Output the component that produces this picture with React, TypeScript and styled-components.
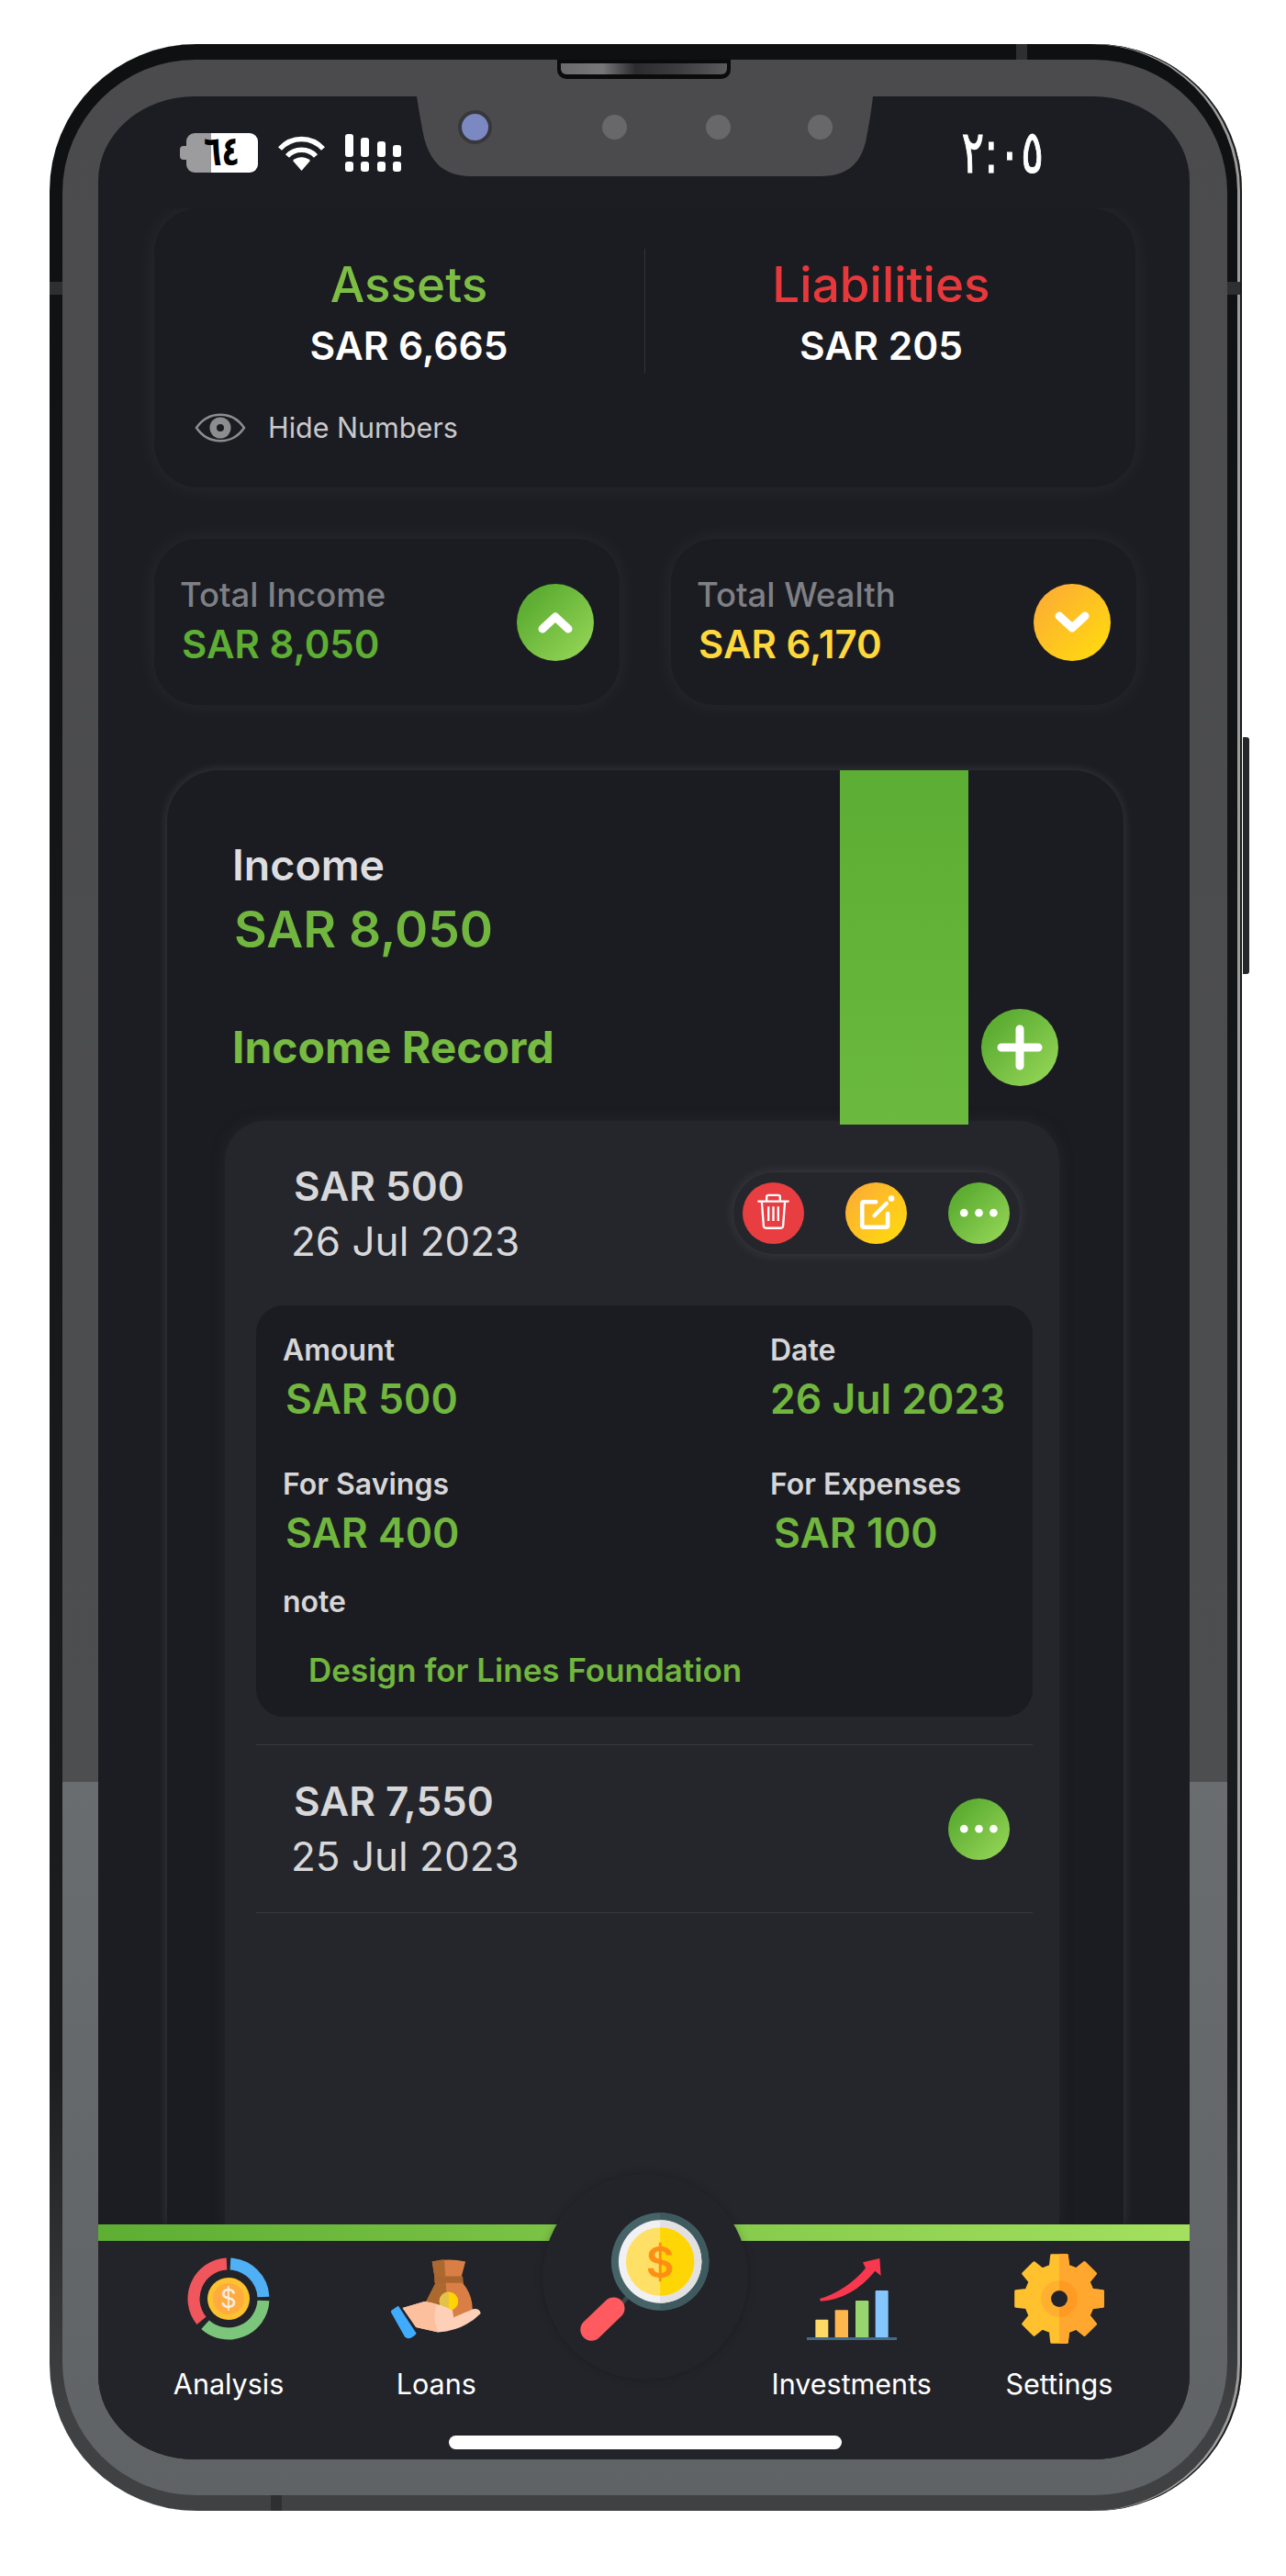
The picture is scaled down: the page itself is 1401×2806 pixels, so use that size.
import React from "react";
import styled, { createGlobalStyle } from "styled-components";

const GlobalStyle = createGlobalStyle`
  html, body {
    margin: 0;
    background: #ffffff;
  }
  * {
    box-sizing: border-box;
  }
  body {
    font-family: Inter, "Liberation Sans", sans-serif;
  }
`;

const GREEN = "linear-gradient(135deg, #5dae33 20%, #9ad95a 100%)";
const ORANGE = "linear-gradient(135deg, #fdb031 15%, #ffd612 85%)";
const RED = "#e83e41";

const Phone = styled.div`
  position: relative;
  width: 1299px;
  height: 2687px;
  margin: 48px 0 0 54px;
  padding: 17px 16px 17px 14px;
  border-radius: 160px;
  background: linear-gradient(180deg, #0f1011 0%, #1c1d1e 82%, #404143 96%);
  box-shadow: inset -2px 0 0 #1a1a1a, inset -5px 0 0 #9c9c9c;
`;

const SideButton = styled.div`
  position: absolute;
  left: 1300px;
  top: 755px;
  width: 7px;
  height: 258px;
  border-radius: 0 3px 3px 0;
  background: #26272a;
`;

const Antenna = styled.div<{ $x: number; $y: number; $w: number; $h: number }>`
  position: absolute;
  left: ${(p) => p.$x}px;
  top: ${(p) => p.$y}px;
  width: ${(p) => p.$w}px;
  height: ${(p) => p.$h}px;
  background: #2e2f31;
`;

const Speaker = styled.div`
  position: absolute;
  left: 553px;
  top: 17px;
  width: 189px;
  height: 21px;
  padding: 4px 4px 5px;
  border-radius: 0 0 10px 10px;
  background: #0b0b0c;

  &::after {
    content: "";
    display: block;
    height: 100%;
    border-radius: 0 0 6px 6px;
    background: linear-gradient(90deg, #6a6a6c 0%, #77777a 25%, #2c2c2e 45%, #3c3c3e 70%, #5a5a5c 100%);
  }
`;

const Bezel = styled.div`
  width: 100%;
  height: 100%;
  padding: 40px 41px 39px 39px;
  border-radius: 145px;
  background: linear-gradient(180deg, #4b4b4d 0, #4d4e50 1876px, #6a6d70 1876px, #5f6365 100%);
`;

const Screen = styled.div`
  position: relative;
  display: flex;
  flex-direction: column;
  width: 100%;
  height: 100%;
  overflow: hidden;
  border-radius: 105px / 92px;
  background: #1c1d22;
`;

const Notch = styled.div`
  position: absolute;
  left: 347px;
  top: 0;
  width: 497px;
  height: 87px;
  background: #4b4b4d;
  clip-path: path("M0 0H497C497 0 495 20 490 45C485 72 470 87 440 87H60C30 87 15 72 8 45C3 20 0 0 0 0Z");
`;

const Camera = styled.div`
  position: absolute;
  left: 45px;
  top: 15px;
  width: 37px;
  height: 37px;
  border: 4px solid #38383c;
  border-radius: 50%;
  background: #7b88c2;
`;

const Sensor = styled.div<{ $x: number }>`
  position: absolute;
  left: ${(p) => p.$x}px;
  top: 20px;
  width: 27px;
  height: 27px;
  border-radius: 50%;
  background: #68686b;
`;

const StatusBar = styled.div`
  display: flex;
  flex: none;
  align-items: center;
  justify-content: space-between;
  height: 122px;
  padding: 0 159px 0 96px;
`;

const StatusIcons = styled.div`
  display: flex;
  align-items: center;
  gap: 21px;
`;

const Battery = styled.div`
  position: relative;
  width: 78px;
  height: 43px;
  padding-left: 19px;
  border-radius: 9px;
  background: linear-gradient(90deg, #9c9c9f 0 27px, #ffffff 27px);
  color: #000000;
  font: 700 32px/41px "DejaVu Sans", sans-serif;

  &::before {
    content: "";
    position: absolute;
    left: -7px;
    top: 14px;
    width: 7px;
    height: 15px;
    border-radius: 4px 0 0 4px;
    background: #9c9c9f;
  }
`;

const TallDigits = styled.span`
  display: inline-block;
  transform: scaleY(1.4);
`;

const Clock = styled.div`
  color: #ffffff;
  font: 400 46px/50px "DejaVu Sans", sans-serif;
  letter-spacing: -1px;
  -webkit-text-stroke: 0.8px #ffffff;
`;

const Content = styled.div`
  display: flex;
  flex: 1;
  flex-direction: column;
  min-height: 0;
  overflow: hidden;
  padding: 0 59px 0 61px;
`;

const TopCard = styled.div`
  flex: none;
  height: 304px;
  padding: 44px 20px 0 21px;
  border-radius: 48px;
  background: #1b1c21;
  box-shadow: 0 0 26px rgba(255, 255, 255, 0.06);
`;

const Balance = styled.div`
  display: grid;
  grid-template-columns: 1fr 1fr;
`;

const BalanceCol = styled.div<{ $divided?: boolean }>`
  display: flex;
  flex-direction: column;
  align-items: center;
  height: 135px;
  padding-top: 9px;
  ${(p) => p.$divided && "border-right: 1px solid #33343a;"}
`;

const BalanceTitle = styled.div<{ $color: string }>`
  color: ${(p) => p.$color};
  font-size: 53px;
  font-weight: 500;
  line-height: 60px;
`;

const BalanceValue = styled.div`
  margin-top: 12px;
  color: #ffffff;
  font-size: 42.5px;
  font-weight: 600;
  line-height: 50px;
`;

const HideRow = styled.div`
  display: flex;
  align-items: center;
  gap: 24px;
  margin-top: 42px;
  padding-left: 23px;
  color: #c9c9cb;
  font-size: 30.5px;
  line-height: 36px;
`;

const StatRow = styled.div`
  display: grid;
  flex: none;
  grid-template-columns: 507px 507px;
  gap: 56px;
  margin-top: 56px;
`;

const StatCard = styled.div`
  display: flex;
  align-items: center;
  justify-content: space-between;
  height: 181px;
  padding: 0 28px;
  border-radius: 48px;
  background: #1b1c21;
  box-shadow: 0 0 26px rgba(255, 255, 255, 0.06);
`;

const StatText = styled.div`
  padding-bottom: 4px;
`;

const StatLabel = styled.div`
  color: #7f8085;
  font-size: 36.5px;
  font-weight: 500;
  line-height: 46px;
`;

const StatValue = styled.div<{ $color: string }>`
  margin: 6px 0 0 2px;
  color: ${(p) => p.$color};
  font-size: 42px;
  font-weight: 600;
  line-height: 50px;
`;

const Round = styled.div<{ $bg: string; $size: number }>`
  display: flex;
  flex: none;
  align-items: center;
  justify-content: center;
  width: ${(p) => p.$size}px;
  height: ${(p) => p.$size}px;
  border-radius: 50%;
  background: ${(p) => p.$bg};

  svg {
    display: block;
  }
`;

const MainCard = styled.div`
  position: relative;
  display: flex;
  flex: 1;
  flex-direction: column;
  min-height: 0;
  margin: 71px 13px 0 14px;
  border-radius: 56px 56px 0 0;
  background: #1b1c21;
  box-shadow: 0 0 12px rgba(255, 255, 255, 0.13);
`;

const GreenBar = styled.div`
  position: absolute;
  left: 733px;
  top: 0;
  z-index: 2;
  width: 140px;
  height: 386px;
  background: linear-gradient(180deg, #5cad33, #6bb93f);
`;

const CardHead = styled.div`
  padding: 75px 71px 0 71px;
`;

const HeadTitle = styled.div`
  color: #dedee0;
  font-size: 46.5px;
  font-weight: 600;
  line-height: 56px;
`;

const HeadAmount = styled.div`
  margin: 7px 0 0 2px;
  color: #71b63e;
  font-size: 55px;
  font-weight: 600;
  line-height: 70px;
`;

const RecordRow = styled.div`
  display: flex;
  align-items: center;
  justify-content: space-between;
  margin-top: 52px;
`;

const RecordTitle = styled.div`
  color: #77bb42;
  font-size: 48px;
  font-weight: 700;
  line-height: 60px;
`;

const Panel = styled.div`
  flex: 1;
  margin: 38px 70px 0 63px;
  padding: 0 29px 0 34px;
  border-radius: 44px 44px 0 0;
  background: #25262b;
  box-shadow: 0 0 14px #25262b;
`;

const EntryRow = styled.div<{ $height: number; $lined?: boolean }>`
  display: flex;
  align-items: center;
  justify-content: space-between;
  height: ${(p) => p.$height}px;
  padding: 0 14px 0 41px;
  ${(p) => p.$lined && "padding-right: 25px; border-top: 1px solid #3a3b40; border-bottom: 1px solid #3a3b40; margin-top: 30px;"}
`;

const EntryAmount = styled.div`
  color: #d8d8da;
  font-size: 44px;
  font-weight: 600;
  line-height: 60px;
`;

const EntryDate = styled.div`
  margin-left: -3px;
  color: #d8d8da;
  font-size: 44px;
  font-weight: 400;
  line-height: 60px;
`;

const ActionPill = styled.div`
  display: flex;
  align-items: center;
  gap: 45px;
  height: 89px;
  padding: 0 11px 0 10px;
  border-radius: 45px;
  background: #25262b;
  box-shadow: 0 0 14px rgba(255, 255, 255, 0.11);
`;

const Detail = styled.div`
  height: 448px;
  padding: 29px 16px 0 29px;
  border-radius: 30px;
  background: #1b1c21;
`;

const DetailGrid = styled.div`
  display: grid;
  grid-template-columns: 531px 1fr;
  row-gap: 45px;
`;

const DetailLabel = styled.div`
  color: #d6d6d8;
  font-size: 32px;
  font-weight: 600;
  line-height: 40px;
`;

const DetailValue = styled.div<{ $shift?: number }>`
  margin: 5px 0 0 ${(p) => p.$shift ?? 0}px;
  color: #71b63e;
  font-size: 44.5px;
  font-weight: 600;
  line-height: 56px;
`;

const NoteLabel = styled(DetailLabel)`
  margin-top: 27px;
`;

const NoteValue = styled.div`
  margin: 34px 0 0 28px;
  color: #71b63e;
  font-size: 35px;
  font-weight: 600;
  line-height: 40px;
`;

const NavBand = styled.div`
  flex: none;
  height: 18px;
  background: linear-gradient(90deg, #5dae33, #a3e05e);
`;

const Nav = styled.div`
  position: relative;
  flex: none;
  height: 238px;
  background: #232429;
`;

const NavGrid = styled.div`
  display: grid;
  grid-template-columns: repeat(5, 1fr);
  padding: 18px 29px 0;
`;

const NavItem = styled.div`
  display: flex;
  flex-direction: column;
  align-items: center;
`;

const NavIcon = styled.div`
  display: flex;
  align-items: center;
  justify-content: center;
  height: 90px;
`;

const NavLabel = styled.div`
  margin-top: 30px;
  color: #ffffff;
  font-size: 30.5px;
  line-height: 36px;
`;

const SearchDisc = styled.div`
  position: absolute;
  left: 484px;
  top: -73px;
  width: 224px;
  height: 224px;
  border-radius: 50%;
  background: #232429;
  box-shadow: 0 0 10px rgba(0, 0, 0, 0.22);
`;

const HomeBar = styled.div`
  width: 428px;
  height: 15px;
  margin: 38px 0 0 382px;
  border-radius: 8px;
  background: #ffffff;
`;

const polar = (r: number, deg: number, cx = 0, cy = 0) => {
  const rad = ((deg - 90) * Math.PI) / 180;
  return [cx + r * Math.cos(rad), cy + r * Math.sin(rad)];
};

const arc = (r: number, a0: number, a1: number) => {
  const [x0, y0] = polar(r, a0, 45, 45);
  const [x1, y1] = polar(r, a1, 45, 45);
  return `M${x0} ${y0}A${r} ${r} 0 ${a1 - a0 > 180 ? 1 : 0} 1 ${x1} ${y1}`;
};

const gearPoints = () => {
  const pts: string[] = [];
  for (let i = 0; i < 8; i++) {
    const a = i * 45;
    [
      [37, a - 15],
      [48, a - 10],
      [48, a + 10],
      [37, a + 15],
    ].forEach(([r, d]) => {
      const [x, y] = polar(r, d, 50, 50);
      pts.push(`${x.toFixed(1)},${y.toFixed(1)}`);
    });
  }
  return pts.join(" ");
};

const WifiIcon = () => (
  <svg width="53" height="39" viewBox="0 0 53 39" fill="none" stroke="#fff" strokeWidth="5.5">
    <path d="M3 15C16 1 37 1 50 15" />
    <path d="M11 23C19 14 34 14 42 23" />
    <path d="M26.5 39L17 28C22 23 31 23 36 28Z" fill="#fff" stroke="none" />
  </svg>
);

const SignalIcon = () => (
  <svg width="61" height="41" viewBox="0 0 61 41" fill="#fff">
    <rect x="0" y="0" width="9" height="25" rx="3" />
    <rect x="17" y="4" width="9" height="21" rx="3" />
    <rect x="35" y="8" width="9" height="17" rx="3" />
    <rect x="52" y="12" width="9" height="13" rx="3" />
    <rect x="0" y="30" width="9" height="11" rx="3" />
    <rect x="17" y="30" width="9" height="11" rx="3" />
    <rect x="35" y="30" width="9" height="11" rx="3" />
    <rect x="52" y="30" width="9" height="11" rx="3" />
  </svg>
);

const EyeIcon = () => (
  <svg width="56" height="36" viewBox="0 0 56 36" fill="none">
    <path d="M2 18C15 -1 41 -1 54 18C41 37 15 37 2 18Z" stroke="#8d8d90" strokeWidth="2.5" />
    <circle cx="28" cy="18" r="11.5" fill="#8d8d90" />
    <circle cx="28" cy="18" r="4" fill="#1b1c21" />
  </svg>
);

const Chevron = ({ down }: { down?: boolean }) => (
  <svg width="38" height="26" viewBox="0 0 38 26" fill="none" stroke="#fff" strokeWidth="9" strokeLinecap="round" strokeLinejoin="round">
    <path d={down ? "M5 6L19 19L33 6" : "M5 20L19 7L33 20"} />
  </svg>
);

const PlusIcon = () => (
  <svg width="50" height="50" viewBox="0 0 50 50" stroke="#fff" strokeWidth="9" strokeLinecap="round">
    <path d="M25 5V45M5 25H45" />
  </svg>
);

const TrashIcon = () => (
  <svg width="67" height="67" viewBox="87 81 202 202" fill="none" stroke="#fff" strokeWidth="7">
    <path d="M139 143H237" strokeLinecap="round" />
    <path d="M166 141V128Q166 123 172 123H204Q210 123 210 128V141" />
    <path d="M150 145L156 224Q157 231 164 231H212Q219 231 220 224L226 145" />
    <path d="M172 160V208M188 160V208M204 160V208" />
  </svg>
);

const EditIcon = () => (
  <svg width="67" height="67" viewBox="423 81 202 202" fill="none" stroke="#fff" strokeLinecap="round">
    <path d="M523 145H484Q478 145 478 151V222Q478 228 484 228H556Q562 228 562 222V184" strokeWidth="14" />
    <path d="M518 190L558 150" strokeWidth="13" />
    <circle cx="574" cy="134" r="10" fill="#fff" stroke="none" />
  </svg>
);

const DotsIcon = () => (
  <svg width="67" height="67" viewBox="759 81 202 202" fill="#fff">
    <circle cx="811" cy="181" r="13" />
    <circle cx="860" cy="181" r="13" />
    <circle cx="908" cy="181" r="13" />
  </svg>
);

const AnalysisIcon = () => (
  <svg width="90" height="90" viewBox="0 0 90 90" fill="none">
    <path d={arc(38, 3, 87)} stroke="#4fb0f5" strokeWidth="13" />
    <path d={arc(38, 93, 222)} stroke="#7cc67c" strokeWidth="13" />
    <path d={arc(38, 231, 357)} stroke="#f0565c" strokeWidth="13" />
    <circle cx="45" cy="45" r="23" fill="#fcc22f" />
    <circle cx="45" cy="45" r="17" fill="#ffab3d" />
    <text x="45" y="55" textAnchor="middle" fill="#f6efe6" fontSize="28" fontFamily="Inter, sans-serif">
      $
    </text>
  </svg>
);

const LoansIcon = () => (
  <svg width="98" height="88" viewBox="770 92 296 264">
    <path d="M905 102Q960 90 1015 102L1002 150L1008 175Q1040 215 1038 265L1000 285H890L882 240L915 175L913 150Z" fill="#d97f45" />
    <path d="M905 102Q930 96 945 95L958 285H890L882 240L915 175L913 150Z" fill="#ab682f" />
    <path d="M913 150H1006L1008 172H913Z" fill="#a9662f" />
    <circle cx="960" cy="232" r="31" fill="#ffd400" />
    <path d="M960 201A31 31 0 0 0 960 263Z" fill="#e3c24a" />
    <path d="M808 254L880 233Q930 240 972 262L976 285L1040 258Q1062 255 1065 272Q1010 328 925 334L852 318Z" fill="#ffd0b8" />
    <path d="M808 254L880 233Q900 235 920 242Q905 290 925 334L852 318Z" fill="#fcc09e" />
    <path d="M793 251L772 266L818 348Q830 358 850 338Z" fill="#3facff" stroke="#3facff" strokeWidth="6" strokeLinejoin="round" />
  </svg>
);

const InvestIcon = () => (
  <svg width="98" height="89" viewBox="120 90 294 267">
    <rect x="148" y="290" width="42" height="60" rx="3" fill="#ffd966" />
    <rect x="212" y="259" width="43" height="91" rx="3" fill="#ffb74d" />
    <rect x="279" y="228" width="43" height="122" rx="3" fill="#97d66f" />
    <rect x="344" y="195" width="42" height="155" rx="3" fill="#85c6ff" />
    <rect x="120" y="348" width="294" height="9" fill="#3f6b8f" />
    <path d="M162 222Q250 195 312 122L303 103L358 90L362 147L343 131Q270 222 165 230Z" fill="#f9374e" />
  </svg>
);

const GearIcon = () => {
  const pts = gearPoints();
  return (
    <svg width="100" height="100" viewBox="0 0 100 100">
      <polygon points={pts} fill="#ffc22e" stroke="#ffc22e" strokeWidth="3" strokeLinejoin="round" />
      <polygon points={pts} fill="#ffa72e" stroke="#ffa72e" strokeWidth="3" strokeLinejoin="round" clipPath="url(#gear-half)" />
      <clipPath id="gear-half">
        <rect x="50" y="0" width="50" height="100" />
      </clipPath>
      <circle cx="50" cy="50" r="20" fill="#ffb02e" />
      <path d="M50 30A20 20 0 0 1 50 70Z" fill="#ff9a22" />
      <circle cx="50" cy="50" r="9" fill="#232429" />
    </svg>
  );
};

const MagnifierIcon = () => (
  <svg width="224" height="224" viewBox="92 25 673 673">
    <path d="M300 510L372 425" stroke="#3a474b" strokeWidth="14" />
    <path d="M252 535L325 465" stroke="#ff5a5f" strokeWidth="72" strokeLinecap="round" />
    <circle cx="477" cy="312" r="160" fill="#466468" />
    <path d="M477 152A160 160 0 0 1 477 472Z" fill="#3f5a5e" />
    <circle cx="477" cy="312" r="136" fill="#f1f1f3" />
    <path d="M477 176A136 136 0 0 1 477 448Z" fill="#e1e1e4" />
    <circle cx="477" cy="312" r="112" fill="#ffe066" />
    <path d="M477 200A112 112 0 0 1 477 424Z" fill="#ffd605" />
    <text x="477" y="364" textAnchor="middle" fill="#ff8f14" fontSize="142" fontWeight="600" fontFamily="Inter, sans-serif">
      $
    </text>
  </svg>
);

const App = () => {
  return (
    <>
      <GlobalStyle />
      <Phone>
        <SideButton />
        <Antenna $x={0} $y={259} $w={14} $h={14} />
        <Antenna $x={1283} $y={259} $w={14} $h={14} />
        <Antenna $x={1053} $y={0} $w={12} $h={17} />
        <Antenna $x={241} $y={2670} $w={12} $h={17} />
        <Bezel>
          <Screen>
            <Notch>
              <Camera />
              <Sensor $x={202} />
              <Sensor $x={315} />
              <Sensor $x={426} />
            </Notch>
            <StatusBar>
              <StatusIcons>
                <Battery>
                  <TallDigits>٦٤</TallDigits>
                </Battery>
                <WifiIcon />
                <SignalIcon />
              </StatusIcons>
              <Clock>
                <TallDigits>٢:٠٥</TallDigits>
              </Clock>
            </StatusBar>
            <Content>
              <TopCard>
                <Balance>
                  <BalanceCol $divided>
                    <BalanceTitle $color="#7cbd44">Assets</BalanceTitle>
                    <BalanceValue>SAR 6,665</BalanceValue>
                  </BalanceCol>
                  <BalanceCol>
                    <BalanceTitle $color="#e8383c">Liabilities</BalanceTitle>
                    <BalanceValue>SAR 205</BalanceValue>
                  </BalanceCol>
                </Balance>
                <HideRow>
                  <EyeIcon />
                  Hide Numbers
                </HideRow>
              </TopCard>
              <StatRow>
                <StatCard>
                  <StatText>
                    <StatLabel>Total Income</StatLabel>
                    <StatValue $color="#5dae33">SAR 8,050</StatValue>
                  </StatText>
                  <Round $bg={GREEN} $size={84}>
                    <Chevron />
                  </Round>
                </StatCard>
                <StatCard>
                  <StatText>
                    <StatLabel>Total Wealth</StatLabel>
                    <StatValue $color="#ffd83d">SAR 6,170</StatValue>
                  </StatText>
                  <Round $bg={ORANGE} $size={84}>
                    <Chevron down />
                  </Round>
                </StatCard>
              </StatRow>
              <MainCard>
                <GreenBar />
                <CardHead>
                  <HeadTitle>Income</HeadTitle>
                  <HeadAmount>SAR 8,050</HeadAmount>
                  <RecordRow>
                    <RecordTitle>Income Record</RecordTitle>
                    <Round $bg={GREEN} $size={84}>
                      <PlusIcon />
                    </Round>
                  </RecordRow>
                </CardHead>
                <Panel>
                  <EntryRow $height={201}>
                    <div>
                      <EntryAmount>SAR 500</EntryAmount>
                      <EntryDate>26 Jul 2023</EntryDate>
                    </div>
                    <ActionPill>
                      <Round $bg={RED} $size={67}>
                        <TrashIcon />
                      </Round>
                      <Round $bg={ORANGE} $size={67}>
                        <EditIcon />
                      </Round>
                      <Round $bg={GREEN} $size={67}>
                        <DotsIcon />
                      </Round>
                    </ActionPill>
                  </EntryRow>
                  <Detail>
                    <DetailGrid>
                      <div>
                        <DetailLabel>Amount</DetailLabel>
                        <DetailValue $shift={3}>SAR 500</DetailValue>
                      </div>
                      <div>
                        <DetailLabel>Date</DetailLabel>
                        <DetailValue>26 Jul 2023</DetailValue>
                      </div>
                      <div>
                        <DetailLabel>For Savings</DetailLabel>
                        <DetailValue $shift={3}>SAR 400</DetailValue>
                      </div>
                      <div>
                        <DetailLabel>For Expenses</DetailLabel>
                        <DetailValue $shift={4}>SAR 100</DetailValue>
                      </div>
                    </DetailGrid>
                    <NoteLabel>note</NoteLabel>
                    <NoteValue>Design for Lines Foundation</NoteValue>
                  </Detail>
                  <EntryRow $height={184} $lined>
                    <div>
                      <EntryAmount>SAR 7,550</EntryAmount>
                      <EntryDate>25 Jul 2023</EntryDate>
                    </div>
                    <Round $bg={GREEN} $size={67}>
                      <DotsIcon />
                    </Round>
                  </EntryRow>
                </Panel>
              </MainCard>
            </Content>
            <NavBand />
            <Nav>
              <SearchDisc>
                <MagnifierIcon />
              </SearchDisc>
              <NavGrid>
                <NavItem>
                  <NavIcon>
                    <AnalysisIcon />
                  </NavIcon>
                  <NavLabel>Analysis</NavLabel>
                </NavItem>
                <NavItem>
                  <NavIcon>
                    <LoansIcon />
                  </NavIcon>
                  <NavLabel>Loans</NavLabel>
                </NavItem>
                <div />
                <NavItem>
                  <NavIcon>
                    <InvestIcon />
                  </NavIcon>
                  <NavLabel>Investments</NavLabel>
                </NavItem>
                <NavItem>
                  <NavIcon>
                    <GearIcon />
                  </NavIcon>
                  <NavLabel>Settings</NavLabel>
                </NavItem>
              </NavGrid>
              <HomeBar />
            </Nav>
          </Screen>
        </Bezel>
        <Speaker />
      </Phone>
    </>
  );
};

export default App;
